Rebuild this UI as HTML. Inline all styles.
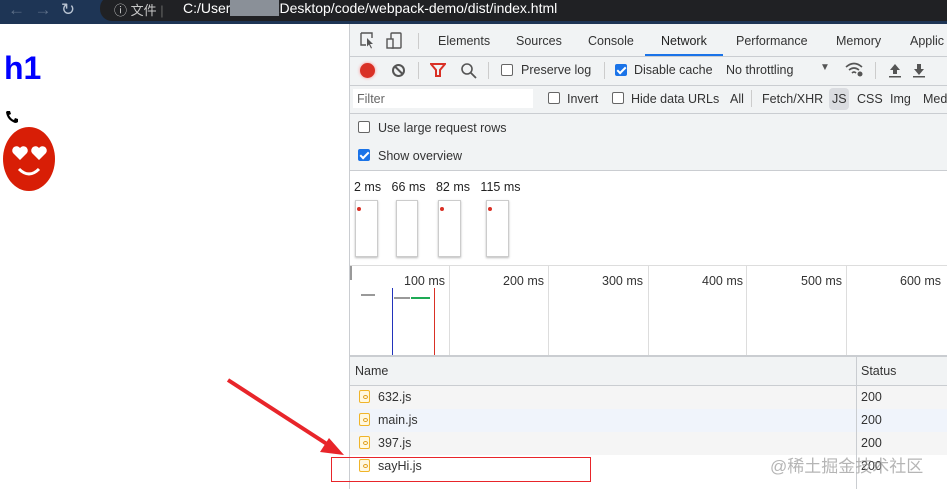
<!DOCTYPE html><html><head><style>
*{margin:0;padding:0;box-sizing:border-box}
body{width:947px;height:489px;overflow:hidden;background:#fff;font-family:"Liberation Sans","Noto Sans CJK SC",sans-serif;position:relative;font-size:12.5px;color:#333}
.a{position:absolute}
.cb{position:absolute;width:12px;height:12px;border:1px solid #666;border-radius:2px;background:#fff}
.cb.on{background:#1a73e8;border-color:#1a73e8}
.cb.on:after{content:"";position:absolute;left:3px;top:0px;width:3px;height:7px;border:solid #fff;border-width:0 2px 2px 0;transform:rotate(45deg)}
.t{position:absolute;white-space:nowrap}
.vl{position:absolute;width:1px;background:#ccc}
.hl{position:absolute;height:1px;background:#cacdd1}
.ic{position:absolute;width:11px;height:13px;border:1.5px solid #f0b429;border-radius:2px;background:#fff8e0}
.ic:after{content:"";position:absolute;left:2.5px;top:4px;width:3px;height:2px;border:1px solid #e0a020;border-radius:50%}
</style></head><body>
<div class="a" style="left:0;top:0;width:947px;height:24px;background:#1e3555"></div>
<div class="a" style="left:100px;top:-4px;width:860px;height:25px;background:#202124;border-radius:12px"></div>
<div class="t" style="left:8px;top:0;color:#5d6f88;font-size:17px">←&nbsp;&nbsp;→&nbsp;&nbsp;<span style="color:#b9c4d2">↻</span></div>
<div class="t" style="left:114px;top:0;color:#c8c8c8;font-size:13px">ⓘ 文件 <span style="color:#666">|</span></div>
<div class="t" style="left:183px;top:0;color:#fff;font-size:14px">C:/User<span style="background:#8a9098;color:#8a9098">xxxxxxx</span>Desktop/code/webpack-demo/dist/index.html</div>
<div class="t" style="left:4px;top:50px;color:#00f;font-weight:bold;font-size:32px">h1</div>
<svg class="a" style="left:5px;top:110px" width="14" height="14"><path d="M2 1l3 0 1 3-2 1q2 4 5 5l1-2 3 1 0 3q-1 1-3 1q-8-3-9-11z" fill="#000"/></svg>
<svg class="a" style="left:3px;top:127px" width="54" height="64"><ellipse cx="26" cy="32" rx="26" ry="32" fill="#d81e06"/><path d="M17 33l-7-7a4 4 0 0 1 7-5a4 4 0 0 1 7 5z M36 33l-7-7a4 4 0 0 1 7-5a4 4 0 0 1 7 5z" fill="#fff"/><path d="M16 42q10 10 20 0" stroke="#fff" stroke-width="3" fill="none"/></svg>
<!-- devtools -->
<div class="a" style="left:349px;top:24px;width:598px;height:465px;background:#f1f3f4;border-left:1px solid #cacdd1"></div>
<div class="hl" style="left:350px;top:56px;width:597px"></div>
<div class="hl" style="left:350px;top:85px;width:597px"></div>
<div class="hl" style="left:350px;top:113px;width:597px"></div>
<div class="hl" style="left:350px;top:170px;width:597px"></div>
<svg class="a" style="left:359px;top:32px" width="48" height="18"><path d="M2 1h11v5M2 1v12h5" fill="none" stroke="#555" stroke-width="1.4"/><path d="M8 6l6 6-3 0 2 4-1 .5-2-4-2 2z" fill="#555"/><rect x="32" y="1" width="10" height="15" rx="1" fill="none" stroke="#555" stroke-width="1.4"/><rect x="28" y="7" width="6" height="9" fill="#f1f3f4" stroke="#555" stroke-width="1.4"/></svg>
<div class="vl" style="left:418px;top:33px;height:16px"></div>
<div class="t" style="left:438px;top:34px;color:#333">Elements</div>
<div class="t" style="left:516px;top:34px">Sources</div>
<div class="t" style="left:588px;top:34px">Console</div>
<div class="t" style="left:661px;top:34px;color:#222">Network</div>
<div class="a" style="left:645px;top:54px;width:78px;height:2px;background:#1a73e8"></div>
<div class="t" style="left:736px;top:34px">Performance</div>
<div class="t" style="left:836px;top:34px">Memory</div>
<div class="t" style="left:910px;top:34px">Applic</div>
<div class="a" style="left:360px;top:63px;width:15px;height:15px;border-radius:50%;background:#d93025;box-shadow:0 0 3px #f88"></div>
<div class="a" style="left:392px;top:64px;width:13px;height:13px;border-radius:50%;border:2px solid #555"></div>
<div class="a" style="left:393px;top:69px;width:11px;height:2px;background:#555;transform:rotate(45deg)"></div>
<div class="vl" style="left:418px;top:62px;height:17px"></div>
<svg class="a" style="left:430px;top:63px" width="16" height="15"><path d="M1 1h14l-5 6v6h-4v-6z" fill="none" stroke="#d93025" stroke-width="2"/></svg>
<svg class="a" style="left:460px;top:62px" width="17" height="17"><circle cx="7" cy="7" r="5" fill="none" stroke="#555" stroke-width="1.6"/><path d="M11 11l5 5" stroke="#555" stroke-width="1.8"/></svg>
<div class="vl" style="left:488px;top:62px;height:17px"></div>
<div class="cb" style="left:501px;top:64px"></div><div class="t" style="left:521px;top:63px">Preserve log</div>
<div class="vl" style="left:604px;top:62px;height:17px"></div>
<div class="cb on" style="left:615px;top:64px"></div><div class="t" style="left:634px;top:63px">Disable cache</div>
<div class="t" style="left:726px;top:63px">No throttling</div>
<div class="t" style="left:820px;top:62px;font-size:10px;color:#555">▼</div>
<svg class="a" style="left:845px;top:61px" width="20" height="17"><path d="M1 6q8-7 16 0M4 9q5-4 10 0M7 12q2-2 4 0" fill="none" stroke="#555" stroke-width="1.6"/><circle cx="15" cy="13" r="2.5" fill="#555"/></svg>
<div class="vl" style="left:875px;top:62px;height:17px"></div>
<svg class="a" style="left:888px;top:63px" width="45" height="15"><path d="M7 1l5 6h-3v4h-4v-4h-3z M1 13h12v1.5h-12z" fill="#555"/><path d="M29 1h4v5h3l-5 6-5-6h3z M25 13h12v1.5h-12z" fill="#555"/></svg>
<div class="a" style="left:353px;top:89px;width:180px;height:19px;background:#fff"></div>
<div class="t" style="left:357px;top:92px;color:#666">Filter</div>
<div class="cb" style="left:548px;top:92px"></div><div class="t" style="left:567px;top:92px">Invert</div>
<div class="cb" style="left:612px;top:92px"></div><div class="t" style="left:631px;top:92px">Hide data URLs</div>
<div class="t" style="left:730px;top:92px">All</div>
<div class="vl" style="left:751px;top:90px;height:17px"></div>
<div class="t" style="left:762px;top:92px">Fetch/XHR</div>
<div class="a" style="left:829px;top:88px;width:20px;height:22px;background:#dadce0;border-radius:4px"></div>
<div class="t" style="left:832px;top:92px">JS</div>
<div class="t" style="left:857px;top:92px">CSS</div>
<div class="t" style="left:890px;top:92px">Img</div>
<div class="t" style="left:923px;top:92px">Med</div>
<div class="cb" style="left:358px;top:121px"></div><div class="t" style="left:378px;top:121px">Use large request rows</div>
<div class="cb on" style="left:358px;top:149px"></div><div class="t" style="left:378px;top:149px">Show overview</div>
<div class="a" style="left:350px;top:171px;width:597px;height:318px;background:#fff"></div>
<div class="t" style="left:354px;top:180px;color:#222">2 ms&nbsp;&nbsp; 66 ms&nbsp;&nbsp; 82 ms&nbsp;&nbsp; 115 ms</div>
<div class="a" style="left:355px;top:200px;width:23px;height:57px;border:1px solid #ccc;box-shadow:0 1px 2px #bbb"></div>
<div class="a" style="left:396px;top:200px;width:22px;height:57px;border:1px solid #ccc;box-shadow:0 1px 2px #bbb"></div>
<div class="a" style="left:438px;top:200px;width:23px;height:57px;border:1px solid #ccc;box-shadow:0 1px 2px #bbb"></div>
<div class="a" style="left:486px;top:200px;width:23px;height:57px;border:1px solid #ccc;box-shadow:0 1px 2px #bbb"></div>
<div class="a" style="left:357px;top:207px;width:4px;height:4px;border-radius:50%;background:#d93025"></div>
<div class="a" style="left:440px;top:207px;width:4px;height:4px;border-radius:50%;background:#d93025"></div>
<div class="a" style="left:488px;top:207px;width:4px;height:4px;border-radius:50%;background:#d93025"></div>
<div class="hl" style="left:350px;top:265px;width:597px;background:#ddd"></div>
<div class="vl" style="left:350px;top:266px;height:14px;width:2px;background:#999"></div>
<div class="vl" style="left:449px;top:266px;height:89px;background:#ddd"></div>
<div class="vl" style="left:548px;top:266px;height:89px;background:#ddd"></div>
<div class="vl" style="left:648px;top:266px;height:89px;background:#ddd"></div>
<div class="vl" style="left:746px;top:266px;height:89px;background:#ddd"></div>
<div class="vl" style="left:846px;top:266px;height:89px;background:#ddd"></div>
<div class="t" style="left:404px;top:274px;color:#333">100 ms</div>
<div class="t" style="left:503px;top:274px">200 ms</div>
<div class="t" style="left:602px;top:274px">300 ms</div>
<div class="t" style="left:702px;top:274px">400 ms</div>
<div class="t" style="left:801px;top:274px">500 ms</div>
<div class="t" style="left:900px;top:274px">600 ms</div>
<div class="a" style="left:361px;top:294px;width:14px;height:2px;background:#999"></div>
<div class="a" style="left:394px;top:297px;width:16px;height:2px;background:#999"></div>
<div class="a" style="left:411px;top:297px;width:19px;height:2px;background:#1eaa55"></div>
<div class="vl" style="left:392px;top:288px;height:67px;background:#2233bb"></div>
<div class="vl" style="left:434px;top:288px;height:67px;background:#d93025"></div>
<div class="a" style="left:350px;top:355px;width:597px;height:31px;background:#f1f3f4;border-top:2px solid #cacdd1;border-bottom:1px solid #cacdd1"></div>
<div class="t" style="left:355px;top:364px">Name</div>
<div class="t" style="left:861px;top:364px">Status</div>
<div class="a" style="left:350px;top:386px;width:597px;height:23px;background:#f5f5f5"></div>
<div class="a" style="left:350px;top:409px;width:597px;height:23px;background:#f0f4fb"></div>
<div class="a" style="left:350px;top:432px;width:597px;height:23px;background:#f5f5f5"></div>
<div class="vl" style="left:856px;top:356px;height:133px;background:#cacdd1"></div>
<div class="ic" style="left:359px;top:390px"></div><div class="t" style="left:378px;top:390px">632.js</div><div class="t" style="left:861px;top:390px">200</div>
<div class="ic" style="left:359px;top:413px"></div><div class="t" style="left:378px;top:413px">main.js</div><div class="t" style="left:861px;top:413px">200</div>
<div class="ic" style="left:359px;top:436px"></div><div class="t" style="left:378px;top:436px">397.js</div><div class="t" style="left:861px;top:436px">200</div>
<div class="ic" style="left:359px;top:459px"></div><div class="t" style="left:378px;top:459px">sayHi.js</div><div class="t" style="left:861px;top:459px">200</div>
<div class="t" style="left:770px;top:452px;font-size:17px;color:rgba(150,150,150,.7)">@稀土掘金技术社区</div>
<div class="a" style="left:331px;top:457px;width:260px;height:25px;border:1.5px solid #e8252a"></div>
<svg class="a" style="left:0;top:0" width="947" height="489"><line x1="228" y1="380" x2="330" y2="446" stroke="#e8252a" stroke-width="4"/><path d="M344 455l-24-3 9-14z" fill="#e8252a"/></svg>
</body></html>
